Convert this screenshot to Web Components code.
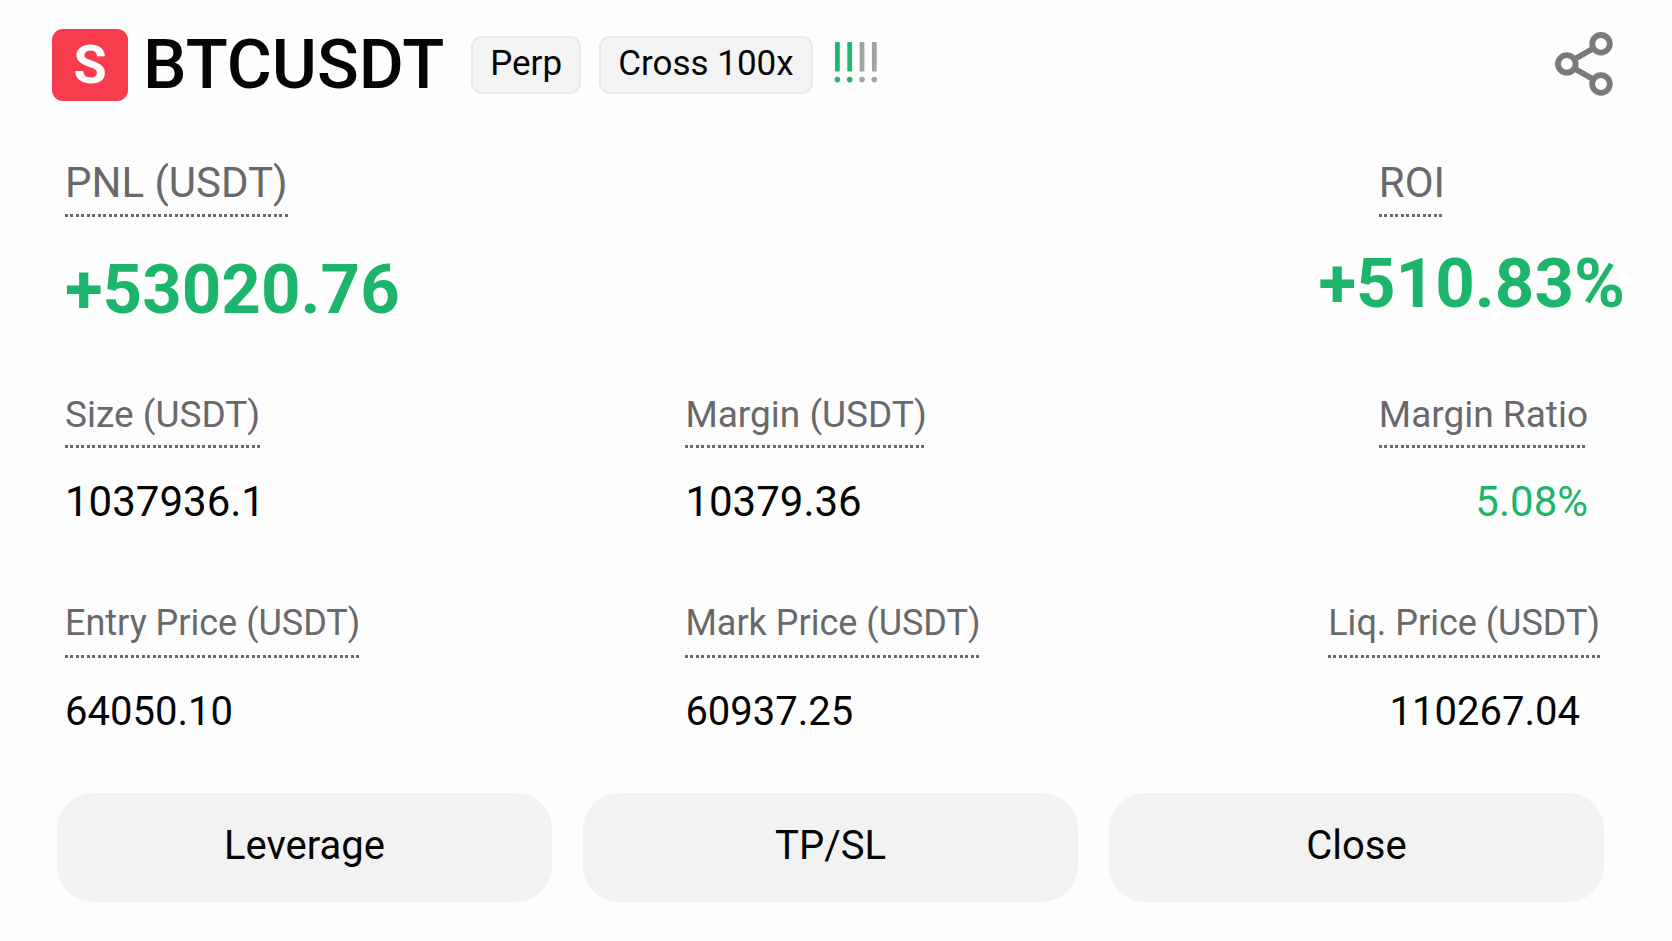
<!DOCTYPE html>
<html lang="en">
<head>
<meta charset="UTF-8">
<meta name="viewport" content="width=device-width, initial-scale=1.0">
<title>BTCUSDT position</title>
<style>
  body {
    margin: 0;
    background: #fdfdfd;
    color: #050505;
    font-family: Roboto, "Liberation Sans", sans-serif;
    --green: #1cb56b;
    --grey: #69696b;
  }
</style>
</head>
<body>
<position-card></position-card>

<script>
class PairBadge extends HTMLElement {
  constructor() {
    super();
    this.attachShadow({ mode: "open" }).innerHTML = `
      <style>
        :host { display: flex; align-items: center; justify-content: center; width: 76px; height: 72px; border-radius: 11px; background: #f73c4e; color: #fff; font-size: 54px; line-height: 72px; font-weight: 700; }
      </style>
      <slot></slot>
    `;
  }
}

class TagChip extends HTMLElement {
  constructor() {
    super();
    this.attachShadow({ mode: "open" }).innerHTML = `
      <style>
        :host { display: block; box-sizing: border-box; padding: 0 17px 2px; border: 2px solid #e9e9e9; border-radius: 11px; background: #f3f3f3; font-size: 35px; line-height: 52px; white-space: nowrap; }
      </style>
      <slot></slot>
    `;
  }
}

class RiskLevel extends HTMLElement {
  connectedCallback() {
    const level = Number(this.getAttribute("level"));
    const bars = [0, 1, 2, 3].map(i => `
      <g fill="${i < level ? "#1fb770" : "#a3a3a3"}">
        <rect x="${i * 12.3}" y="0" width="4.8" height="29.5" rx="0.8"/>
        <circle cx="${i * 12.3 + 2.4}" cy="37.6" r="2.8"/>
      </g>`).join("");

    this.attachShadow({ mode: "open" }).innerHTML = `
      <style>
        :host { display: block; }
        svg { display: block; overflow: visible; }
      </style>
      <svg width="42" height="47" viewBox="0 0 42 47" role="img" aria-label="Risk level ${level} of 4">${bars}</svg>
    `;
  }
}

class ShareButton extends HTMLElement {
  constructor() {
    super();
    this.attachShadow({ mode: "open" }).innerHTML = `
      <style>
        :host { display: block; }
        button { display: block; background: none; border: none; padding: 0; cursor: pointer; }
        svg { display: block; }
      </style>
      <button aria-label="Share">
        <svg width="58" height="66" viewBox="0 0 58 66" fill="none" stroke="#7a7a7c" stroke-width="5.8">
          <path d="M19.4 27.2 38.6 16.2M19.4 36.6 38.6 47.6"/>
          <circle cx="11.8" cy="31.9" r="8.8"/>
          <circle cx="46" cy="11.8" r="8.8"/>
          <circle cx="46" cy="52" r="8.8"/>
        </svg>
      </button>
    `;
  }
}

class StatItem extends HTMLElement {
  connectedCallback() {
    this.attachShadow({ mode: "open" }).innerHTML = `
      <style>
        :host { display: flex; flex-direction: column; align-items: flex-start; gap: 30px; white-space: nowrap; }
        .label {
          padding-bottom: var(--label-gap, 12px);
          color: var(--grey);
          font-size: var(--label-size, 37px);
          line-height: 42px;
          background: linear-gradient(90deg, #6a6a6c 0 3px, transparent 3px 5px, #6a6a6c 5px 8px, transparent 8px) left bottom / 11px 3px repeat-x;
        }
        .value { font-size: var(--value-size, 42px); line-height: 48px; }
        :host([up]) .value { color: var(--green); }
        :host([end]) { align-items: flex-end; }
        :host([hero]) { gap: 33px; }
        :host([hero]) .label { padding-bottom: 10px; font-size: 42px; line-height: 48px; }
        :host([hero]) .value { font-size: 69px; line-height: 80px; font-weight: 700; }
      </style>
      <span class="label" part="label">${this.getAttribute("label")}</span>
      <span class="value" part="value"><slot></slot></span>
    `;
  }
}

class ActionButton extends HTMLElement {
  constructor() {
    super();
    this.attachShadow({ mode: "open" }).innerHTML = `
      <style>
        :host { display: block; }
        button { width: 100%; height: 109px; padding: 0 0 4px; border: none; border-radius: 36px; background: #f2f2f2; color: inherit; font: inherit; font-size: 40px; line-height: 48px; cursor: pointer; }
      </style>
      <button><slot></slot></button>
    `;
  }
}

class PositionCard extends HTMLElement {
  constructor() {
    super();
    this.attachShadow({ mode: "open" }).innerHTML = `
      <style>
        :host { display: block; padding: 29px 0 39px; }
        header { display: flex; align-items: center; padding: 0 59px 0 52px; }
        h1 { margin: 0 27px 0 15px; font-size: 69px; line-height: 72px; font-weight: 500; }
        tag-chip { margin-right: 18px; }
        risk-level { margin-left: 4px; }
        share-button { margin-left: auto; }
        .hero { display: flex; justify-content: space-between; padding: 58px 47px 0 65px; }
        .roi { gap: 27px; }
        .roi::part(label) { margin-right: 180px; }
        .grid { display: grid; grid-template-columns: 2fr 2fr 1fr; row-gap: 76px; padding: 64px 56px 57px 65px; }
        .last { --label-size: 36px; --label-gap: 14px; --value-size: 40px; }
        .ratio { padding-right: 28px; }
        .liq { padding-right: 16px; }
        .liq::part(value) { margin-right: 20px; }
        footer { display: grid; grid-template-columns: repeat(3, 1fr); gap: 31px; padding: 0 68px 0 57px; }
      </style>
      <header>
        <pair-badge>S</pair-badge>
        <h1>BTCUSDT</h1>
        <tag-chip>Perp</tag-chip>
        <tag-chip>Cross 100x</tag-chip>
        <risk-level level="2"></risk-level>
        <share-button></share-button>
      </header>
      <section class="hero">
        <stat-item hero up label="PNL (USDT)">+53020.76</stat-item>
        <stat-item hero up end class="roi" label="ROI">+510.83%</stat-item>
      </section>
      <section class="grid">
        <stat-item label="Size (USDT)">1037936.1</stat-item>
        <stat-item label="Margin (USDT)">10379.36</stat-item>
        <stat-item up end class="ratio" label="Margin Ratio">5.08%</stat-item>
        <stat-item class="last" label="Entry Price (USDT)">64050.10</stat-item>
        <stat-item class="last" label="Mark Price (USDT)">60937.25</stat-item>
        <stat-item end class="last liq" label="Liq. Price (USDT)">110267.04</stat-item>
      </section>
      <footer>
        <action-button>Leverage</action-button>
        <action-button>TP/SL</action-button>
        <action-button>Close</action-button>
      </footer>
    `;
  }
}

customElements.define("pair-badge", PairBadge);
customElements.define("tag-chip", TagChip);
customElements.define("risk-level", RiskLevel);
customElements.define("share-button", ShareButton);
customElements.define("stat-item", StatItem);
customElements.define("action-button", ActionButton);
customElements.define("position-card", PositionCard);
</script>
</body>
</html>
